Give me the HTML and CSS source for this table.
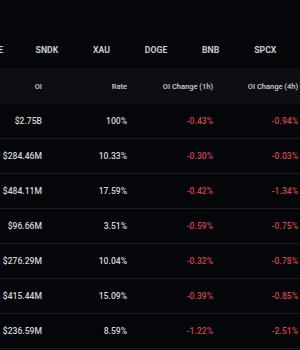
FILE: index.html
```html
<!DOCTYPE html>
<html>
<head>
<meta charset="utf-8">
<link rel="stylesheet" href="styles.css">
</head>
<body>
<div class="page">
  <div class="tabs">
    <span class="tab">HYPE</span>
    <span class="tab">SNDK</span>
    <span class="tab">XAU</span>
    <span class="tab">DOGE</span>
    <span class="tab">BNB</span>
    <span class="tab">SPCX</span>
  </div>
  <div class="table">
    <div class="row head">
      <span>OI</span><span>Rate</span><span>OI Change (1h)</span><span>OI Change (4h)</span>
    </div>
    <div class="row"><span>$2.75B</span><span>100%</span><span class="neg">-0.43%</span><span class="neg">-0.94%</span></div>
    <div class="row"><span>$284.46M</span><span>10.33%</span><span class="neg">-0.30%</span><span class="neg">-0.03%</span></div>
    <div class="row"><span>$484.11M</span><span>17.59%</span><span class="neg">-0.42%</span><span class="neg">-1.34%</span></div>
    <div class="row"><span>$96.66M</span><span>3.51%</span><span class="neg">-0.59%</span><span class="neg">-0.75%</span></div>
    <div class="row"><span>$276.29M</span><span>10.04%</span><span class="neg">-0.32%</span><span class="neg">-0.78%</span></div>
    <div class="row"><span>$415.44M</span><span>15.09%</span><span class="neg">-0.39%</span><span class="neg">-0.85%</span></div>
    <div class="row"><span>$236.59M</span><span>8.59%</span><span class="neg">-1.22%</span><span class="neg">-2.51%</span></div>
  </div>
</div>
</body>
</html>
```
FILE: styles.css
```css
html, body {
  margin: 0;
  padding: 0;
  background: #050609;
}
.page {
  width: 300px;
  height: 350px;
  overflow: hidden;
  font-family: Roboto, "Noto Sans", sans-serif;
  color: #d3d5d9;
}
.tabs {
  margin-top: 32px;
  height: 36px;
  display: flex;
  align-items: center;
  margin-left: -35px;
  white-space: nowrap;
}
.tab {
  flex: 0 0 54.6px;
  text-align: center;
  font-size: 8.7px;
  font-weight: 700;
  color: #c9cbd0;
}
.row {
  display: grid;
  grid-template-columns: 42px 85px 86px 85px;
  align-items: center;
  height: 34px;
  border-bottom: 1px solid #1a1c21;
  font-size: 8.6px;
  font-weight: 500;
  white-space: nowrap;
}
.row span {
  text-align: right;
}
.row.head {
  height: 36px;
  border-bottom: none;
  background: #0c0e12;
  color: #cdd0d4;
  font-size: 7.5px;
  font-weight: 500;
}
.neg {
  color: #d6414f;
}
```
